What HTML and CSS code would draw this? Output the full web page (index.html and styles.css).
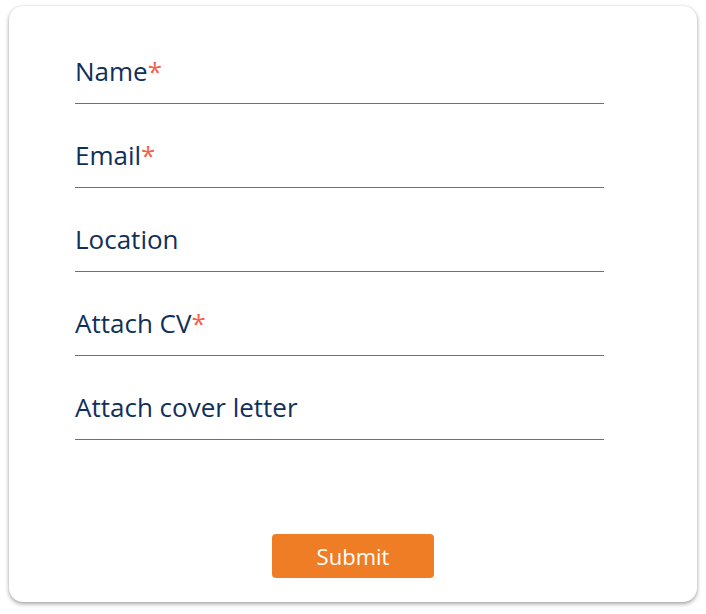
FILE: index.html
```html
<!DOCTYPE html>
<html>
<head>
<meta charset="utf-8">
<link rel="stylesheet" href="styles.css">
</head>
<body>
<form class="card">
  <div class="fields">
    <div class="field"><span class="label">Name<span class="req">*</span></span></div>
    <div class="field"><span class="label">Email<span class="req">*</span></span></div>
    <div class="field"><span class="label">Location</span></div>
    <div class="field"><span class="label">Attach CV<span class="req">*</span></span></div>
    <div class="field"><span class="label">Attach cover letter</span></div>
  </div>
  <div class="actions">
    <button type="button" class="submit">Submit</button>
  </div>
</form>
</body>
</html>
```
FILE: styles.css
```css
html, body {
  margin: 0;
  background: #ffffff;
}
body {
  padding: 6px 9px;
  font-family: "Open Sans", "Noto Sans", sans-serif;
}
.card {
  box-sizing: border-box;
  width: 688px;
  height: 596px;
  background: #ffffff;
  border-radius: 14px;
  box-shadow: 0 2px 4px rgba(0,0,0,0.35), 0 0 2px rgba(0,0,0,0.12);
  padding: 14px 0 0 66px;
  display: flex;
  flex-direction: column;
}
.fields {
  display: flex;
  flex-direction: column;
  width: 529px;
}
.field {
  box-sizing: border-box;
  height: 84px;
  border-bottom: 1px solid #707070;
  display: flex;
  align-items: flex-end;
  padding-bottom: 14px;
}
.label {
  font-size: 26px;
  line-height: 36px;
  color: #10305a;
}
.req {
  color: #f5604a;
}
.actions {
  display: flex;
  justify-content: center;
  margin-top: 94px;
  padding-right: 66px;
}
.submit {
  width: 162px;
  height: 44px;
  border: none;
  border-radius: 4px;
  background: #ee7d26;
  color: #ffffff;
  font-family: "Open Sans", "Noto Sans", sans-serif;
  font-size: 22px;
  padding: 0;
}
```
